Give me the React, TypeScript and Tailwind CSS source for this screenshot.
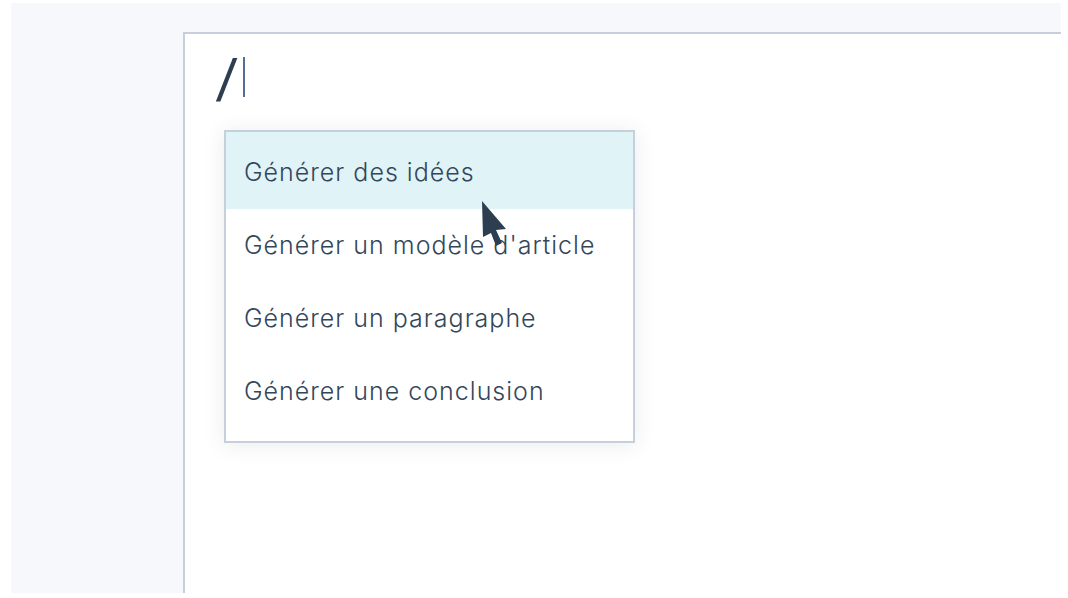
import React from "react";

const items = [
  "Générer des idées",
  "Générer un modèle d'article",
  "Générer un paragraphe",
  "Générer une conclusion",
];

export default function App() {
  return (
    <div
      className="relative w-[1068px] h-[598px] bg-white pt-[3px] pl-[11px] pr-[7px] overflow-hidden"
      style={{ fontFamily: "Inter, 'Noto Sans', sans-serif" }}
    >
      <div className="h-[590px] bg-[#f6f8fc] pt-[29px] pl-[172px]">
        <div className="h-full bg-white border-t-2 border-l-2 border-[#c5d0dc] pl-[29px] pt-[17px]">
          <div className="flex items-center h-[52px] text-[50px] leading-none text-[#2d3e50]">
            <span className="inline-block font-[350] origin-left scale-x-[1.45] translate-y-[1px]">/</span>
            <span className="ml-[12px] w-[2px] h-[40px] bg-[#516f90]" />
          </div>
          <div className="ml-[10px] mt-[27px] w-[411px] h-[313px] border-2 border-[#c5d0dc] bg-white shadow-[0_2px_20px_0_rgba(45,62,80,0.10)]">
            {items.map((t, i) => (
              <div
                key={t}
                className={
                  i === 0
                    ? "h-[77px] pt-[4px] pl-[18px] flex items-center bg-[#e0f3f6] text-[25px] font-[350] text-[#33475b] tracking-[1px]"
                    : "h-[73px] pl-[18px] flex items-center text-[25px] font-[350] text-[#33475b] tracking-[1px]"
                }
              >
                {t}
              </div>
            ))}
          </div>
        </div>
      </div>
      <svg
        className="absolute left-[481px] top-[200px]"
        width="30"
        height="48"
        viewBox="0 0 30 48"
      >
        <path d="M1 1 L25 29 L15 30 L21 43 L15 46 L10 33 L2 37 Z" fill="#2d3e50" />
      </svg>
    </div>
  );
}
